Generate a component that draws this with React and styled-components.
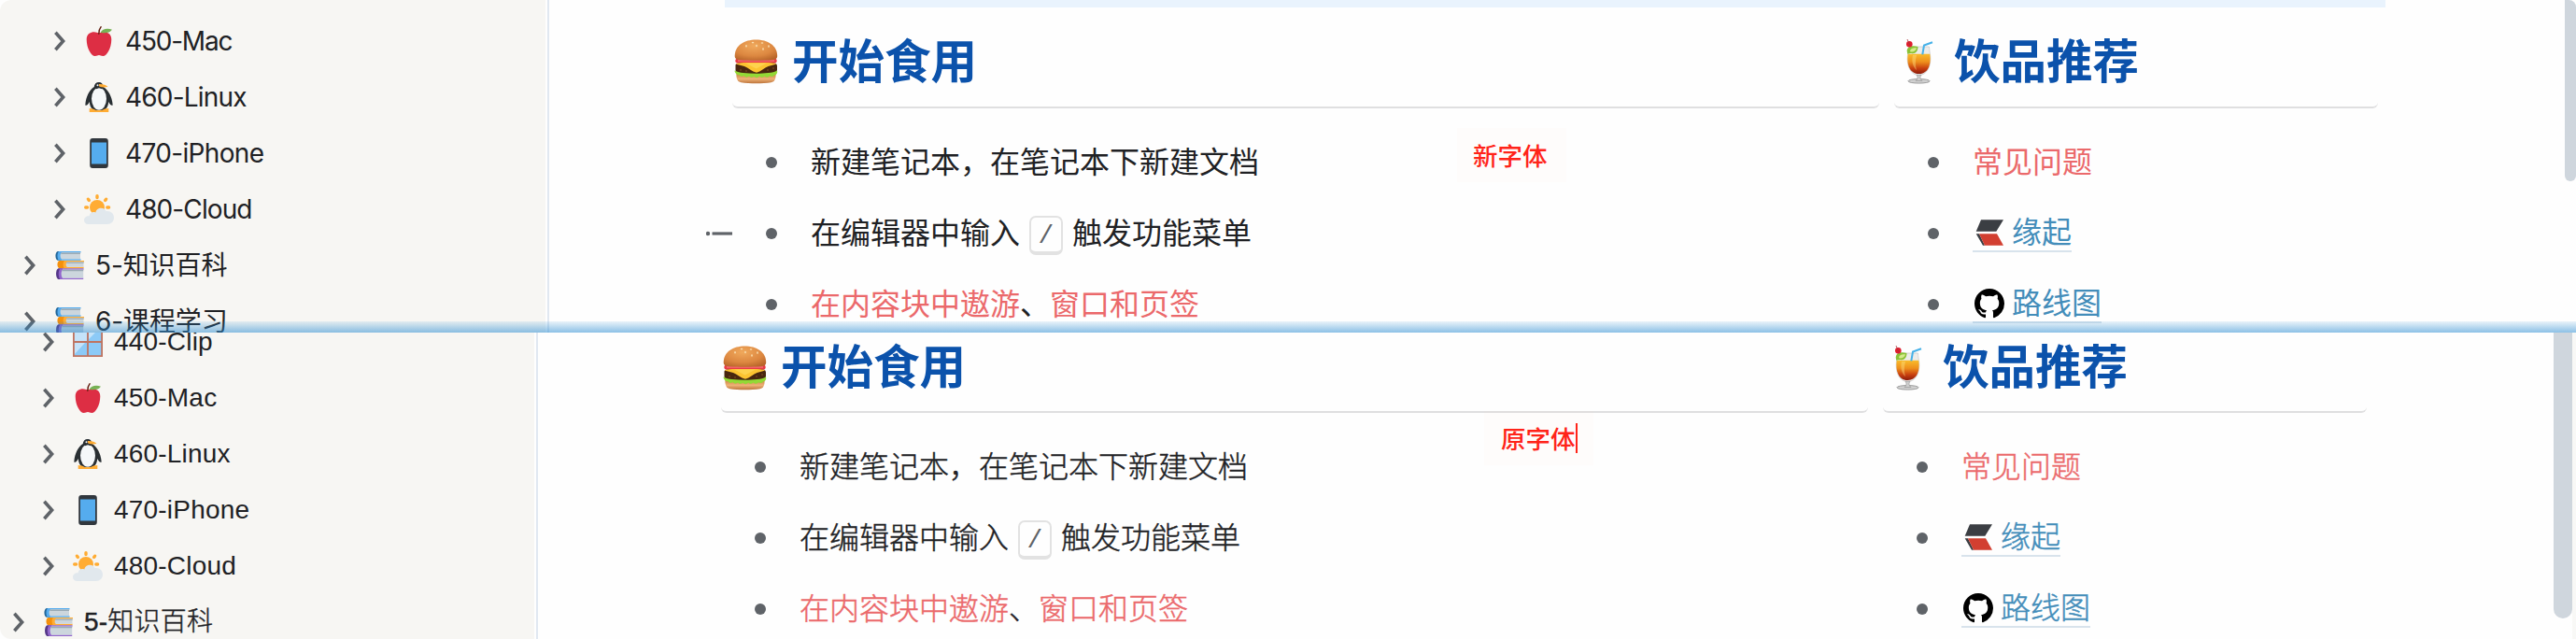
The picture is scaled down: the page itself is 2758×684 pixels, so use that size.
import React from 'react';
import styled, { createGlobalStyle } from 'styled-components';

const GlobalStyle = createGlobalStyle`
  * { box-sizing: border-box; }
  body { margin: 0; background: #fefefe; }
`;

const cjk = '"Noto Sans CJK SC", sans-serif';

const Screen = styled.main`
  width: 2758px;
  height: 684px;
  display: flex;
  flex-direction: column;
  overflow: hidden;
  color: #202124;
`;

const Pane = styled.section`
  position: relative;
  display: flex;
  flex: none;
  height: ${(p) => p.$height}px;
  overflow: hidden;
  background: #fefefe;
  font-family: ${(p) => p.$font};
  font-weight: ${(p) => p.$weight};
`;

const Sidebar = styled.nav`
  flex: none;
  width: ${(p) => p.$width}px;
  overflow: hidden;
  background: #f7f6f3;
  border-radius: ${(p) => p.$radius};
`;

const Tree = styled.div`
  display: flex;
  flex-direction: column;
  margin-top: ${(p) => p.$shift}px;
`;

const TreeRow = styled.div`
  display: flex;
  align-items: center;
  flex: none;
  height: 60px;
  padding-left: ${(p) => p.$indent}px;
  font-size: 28px;
  line-height: 40px;
  white-space: nowrap;
  svg { flex: none; }
`;

const RowIcon = styled.span`
  display: flex;
  margin: 0 12px 0 20px;
`;

const RowLabel = styled.span`
  letter-spacing: ${(p) => p.$tracking}px;
  -webkit-text-stroke: ${(p) => p.$stroke}px currentColor;
`;

const Divider = styled.div`
  flex: none;
  width: 2px;
  margin-left: 2px;
  background: #e1e8f1;
`;

const Doc = styled.article`
  flex: none;
  width: 1778px;
  margin-left: 188px;
  margin-top: ${(p) => p.$shift}px;
`;

const Callout = styled.div`
  height: 8px;
  margin-bottom: 8px;
  background: #e9f3fd;
`;

const Columns = styled.div`
  display: flex;
  gap: 16px;
  padding: 0 8px;
`;

const Column = styled.div`
  flex: none;
  width: ${(p) => p.$width}px;
`;

const Heading = styled.h2`
  display: flex;
  align-items: center;
  gap: 13px;
  height: 100px;
  margin: 0;
  padding: ${(p) => p.$drop}px 0 0 1px;
  border-bottom: 2px solid #dfdfe0;
  border-radius: 6px;
  color: #0b52ab;
  font-size: 49.5px;
  line-height: 60px;
  font-weight: 700;
  white-space: nowrap;
`;

const List = styled.ul`
  margin: ${(p) => p.$gap}px 0 0;
  padding: 0;
  list-style: none;
  -webkit-text-stroke: ${(p) => p.$stroke}px currentColor;
`;

const Item = styled.li`
  position: relative;
  display: flex;
  align-items: center;
  height: 76px;
  padding-left: 36px;
  font-size: 32px;
  line-height: 48px;
  white-space: nowrap;
  &::before {
    content: '';
    flex: none;
    width: 12px;
    height: 12px;
    margin-right: 36px;
    border-radius: 50%;
    background: #5f6368;
  }
`;

const Line = styled.div`
  display: flex;
  align-items: center;
  margin-top: -1px;
`;

const GutterMark = styled.svg`
  position: absolute;
  left: -28px;
  top: 34px;
`;

const Ref = styled.span`
  color: #eb696b;
`;

const Key = styled.kbd`
  display: flex;
  align-items: center;
  justify-content: center;
  width: 36px;
  height: 42px;
  margin: 4px 10px 0;
  padding-top: 5px;
  border: 2px solid #e2e2e2;
  border-bottom-width: 4px;
  border-radius: 7px;
  color: #5f6368;
  font: 400 28px/30px "Liberation Mono", monospace;
  -webkit-text-stroke: 0;
`;

const Link = styled.a`
  display: flex;
  align-items: center;
  gap: 8px;
  height: ${(p) => p.$height}px;
  padding-left: 2px;
  border-bottom: 2px solid #d8e3ec;
  color: #438dba;
`;

const ScrollThumb = styled.div`
  position: absolute;
  top: 0;
  right: ${(p) => p.$right}px;
  width: ${(p) => p.$width}px;
  height: ${(p) => p.$height}px;
  border-radius: ${(p) => p.$radius};
  background: #cfd6dd;
`;

const EdgeStrip = styled.div`
  position: absolute;
  top: 0;
  right: 0;
  width: 4px;
  height: 100%;
  background: #f8f8f6;
`;

const Glow = styled.div`
  position: absolute;
  left: 0;
  right: 0;
  bottom: 0;
  height: 12px;
  background: linear-gradient(rgba(46, 142, 210, 0.1), rgba(46, 142, 210, 0.55));
`;

const Note = styled.div`
  position: absolute;
  left: ${(p) => p.$x}px;
  top: ${(p) => p.$y}px;
  display: flex;
  align-items: center;
  width: 117px;
  height: 58px;
  padding-left: ${(p) => p.$pad}px;
  background: rgba(255, 190, 150, 0.03);
  color: #ff2419;
  font: 500 26.5px/40px ${cjk};
  white-space: nowrap;
`;

const Caret = styled.i`
  width: 2px;
  height: 32px;
  background: #ff2419;
`;

const Chevron = () => (
  <svg width="12" height="22" viewBox="0 0 12 22" fill="none" stroke="#5f6368" strokeWidth="3.6">
    <path d="M1.400 1.800 9.600 11l-8.200 9.200" />
  </svg>
);

const Svg32 = ({ children }) => (
  <svg width="32" height="32" viewBox="0 0 32 32">{children}</svg>
);

const Apple = () => (
  <Svg32>
    <path fill="#dd2e44" d="M21.3 6.2c-2.600 0-2.700.9-5.300.9s-2.700-.9-5.300-.9c-3.600 0-8 1.800-8 8C2.700 24 8 32 11.600 32c2.600 0 2.700-.9 4.400-.9s1.800.9 4.400.9c3.600 0 8.900-8 8.900-17.800 0-6.200-4.400-8-8-8z" />
    <path fill="#77b255" d="M17.600 6.700c2-3.600 7-5 12.400-3-2.300 3-7.500 4.600-12.400 3z" />
    <path fill="none" stroke="#662113" strokeWidth="1.400" strokeLinecap="round" d="M15.800 8.300c0-3 .7-5.600 2.300-7.500" />
  </Svg32>
);

const Penguin = () => (
  <Svg32>
    <path fill="#292f33" d="M16 0c-3 0-5 1.900-5.200 5C6 8 2 15 1.300 24.500c1.500.8 3-.5 4.600-3.500C6 27 9 31 16 31s10-4 10.100-10c1.600 3 3.100 4.300 4.600 3.500C30 15 25.500 8 20.600 5 20.200 1.800 18.500 0 16 0z" />
    <ellipse cx="16" cy="17.700" rx="8" ry="12" fill="#f5f8fa" />
    <path fill="#292f33" d="M11 4.500C12 1 20 1 20.600 5l-1.400 2.200L16 6.300l-3 1z" />
    <circle cx="14.500" cy="3.200" r="1" fill="#f5f8fa" />
    <path fill="#ffac33" d="M15.800 2c4-.2 8 .6 9.800 3-3.500.8-7 .6-9.400-.5zM5.700 28c3 .2 5.300.8 7.200 2h6.200c1.900-1.200 4.200-1.800 7.200-2v4H5.700z" />
  </Svg32>
);

const Phone = () => (
  <Svg32>
    <rect x="6.200" width="19.600" height="32" rx="3" fill="#31373d" />
    <path fill="#55acee" d="M8 4.400h16v23.200H8z" />
  </Svg32>
);

const SunCloud = () => (
  <Svg32>
    <circle cx="14" cy="14" r="8" fill="#ffac33" />
    <g stroke="#ffac33" strokeWidth="3.400" strokeLinecap="round">
      <path d="M14 1.700v1.800M4.400 5.200l1 1.300M23.600 5.200l-1 1.300M1.700 14h1.800M24.800 14h1.800" />
    </g>
    <path fill="#e1e8ed" d="M25.200 18.100c-.5 0-.9.100-1.400.2-.9-2-3-3.600-5.500-3.600-3 0-5.500 2-5.900 4.800-.9-.5-1.800-.6-2.700-.5-2.300.1-4 2-4.100 4.300C2.500 22.900 0 25 0 27.700 0 30.200 2 32 4.500 32h20.600c3.800 0 6.900-3.100 6.900-7s-3-6.900-6.800-6.900z" />
  </Svg32>
);

const Books = () => (
  <Svg32>
    <path fill="#226699" d="M3.700 1h4v9.700h-4C.7 10 .7 2 3.700 1z" />
    <path fill="#55acee" d="M5 1h23.500v1.600H7.500v6.600h21v1.500H5C3 9 3 3 5 1z" />
    <path fill="#ccd6dd" d="M7.500 2.600H28v6.600H7.500c-1.300-1.600-1.300-5 0-6.600z" />
    <path fill="#9aaab4" d="M8 2.600h20v1.500H7z" />
    <path fill="#f4900c" d="M5.700 11H14v8.300H5.700c-3-.8-3-7.500 0-8.300z" />
    <path fill="#ffac33" d="M11 11h21v1.400H14v5.400h17.600v1.500H11c-1.800-1.600-1.800-6.600 0-8.300z" />
    <path fill="#ccd6dd" d="M13.500 12.400h18v5.400h-18c-1.200-1.400-1.200-4 0-5.400z" />
    <path fill="#9aaab4" d="M13.600 12.400h18v1.400H13z" />
    <path fill="#553788" d="M4.500 19.300H9V31H4.500c-3.300-1-3.300-10.700 0-11.700z" />
    <path fill="#9266cc" d="M6.500 19.300h25v1.500H9v8.700h22.200V31H6.500c-2.300-2.300-2.300-9.400 0-11.700z" />
    <path fill="#ccd6dd" d="M8.700 20.800h22.500v8.700H8.700c-1.500-2.200-1.500-6.500 0-8.700z" />
    <path fill="#9aaab4" d="M9 20.800h22.200v1.500H8z" />
  </Svg32>
);

const WindowIcon = () => (
  <Svg32>
    <path fill="#8ccaf7" d="M0 0h32v32H0z" />
    <path fill="#c5e3f9" d="M1 1h14v14H1zM17 1h12L17 13zM1 17h12L1 30z" />
    <path fill="none" stroke="#bf7460" strokeWidth="1.800" d="M.9.900h30.200v30.200H.900zM16 0v32M0 16h32" />
  </Svg32>
);

const Burger = () => (
  <svg width="50" height="50" viewBox="0 0 50 50">
    <defs>
      <radialGradient id="bun" cx="45%" cy="30%" r="75%">
        <stop offset="0" stopColor="#f0a95c" />
        <stop offset=".65" stopColor="#dc8740" />
        <stop offset="1" stopColor="#b9662a" />
      </radialGradient>
      <linearGradient id="heel" x2="0" y2="1">
        <stop offset="0" stopColor="#c9803f" />
        <stop offset=".55" stopColor="#eeb277" />
        <stop offset="1" stopColor="#bd733a" />
      </linearGradient>
    </defs>
    <path fill="url(#heel)" d="M3.500 37.500h42c.6 5-1 9-5 9.800-9 1.300-23 1.300-32 0-4-.8-5.600-4.800-5-9.800z" />
    <path fill="#48260f" d="M2.500 29c0-2 3-3 5-3h34c3 0 5.500 1 5.500 3.500v4c0 2.500-2.500 4-6 4.300-10 1-23 1-33 0-4-.4-5.500-1.800-5.500-4.300z" />
    <g fill="#6f421e"><circle cx="8" cy="34" r="1" /><circle cx="14" cy="35" r="1" /><circle cx="37" cy="34" r="1" /><circle cx="43" cy="32" r="1" /></g>
    <path fill="#93d936" d="M1.500 34.500c3 1.500 6 2.200 9 2.500 9 1 19 1 27 0 4-.4 7-1 9.500-2.500.8 2.500-.6 4.800-3 5-1.400 2-3.500 2-5 .8-1.700 2-4 2-5.500.3-1.700 1.800-4 1.700-5.400 0-1.600 2-4.300 2-5.700.2-1.600 1.600-4 1.500-5.400-.3-1.700 1.700-4.200 1.500-5.400-.4-1.700 1.300-4 1-5-.8-2.600.3-5-2.300-5.100-4.800z" />
    <path fill="#e93b47" d="M3 22h43c1.500 2.500.5 4.600-2 4.600H5c-2.500 0-3.500-2.100-2-4.600z" />
    <path fill="#f78a88" d="M5 23.600h39v.9H5z" />
    <path fill="#fcc331" d="M2.500 27.500c3-1.500 8-1.500 12-1.500h20c4 0 9 0 12 1.500l-9 2.500c-4 1.600-8 5.500-12.500 6.800C20 35.500 16 31.600 12 30z" />
    <path fill="#ffdc63" d="M13 26.600h23l-11.300 6z" opacity=".6" />
    <path fill="url(#bun)" d="M1.700 19C1.700 7.500 12 1.500 24.400 1.500S47.200 7.500 47.200 19c0 3-2.500 4-5.700 4.200-10 .6-24 .6-34 0C4.200 23 1.700 22 1.700 19z" />
    <g fill="#f9deb0"><ellipse cx="21" cy="4.600" rx="1.300" ry=".8" /><ellipse cx="14" cy="8.300" rx=".8" ry="1.300" /><ellipse cx="25" cy="8" rx=".8" ry="1.200" /><ellipse cx="31" cy="5" rx="1.300" ry=".8" /><ellipse cx="32" cy="11.500" rx=".8" ry="1.300" /><ellipse cx="38" cy="8.600" rx=".8" ry="1.300" /></g>
  </svg>
);

const Drink = () => (
  <svg width="50" height="50" viewBox="0 0 50 50">
    <defs>
      <linearGradient id="juice" x2="0" y2="1">
        <stop offset="0" stopColor="#f9bd2c" />
        <stop offset=".4" stopColor="#ee8f1c" />
        <stop offset=".72" stopColor="#c9400f" />
        <stop offset="1" stopColor="#8c1c0c" />
      </linearGradient>
    </defs>
    <path fill="#ececea" stroke="#c9c9c9" strokeWidth=".7" d="M14.500 9h22c.2 3 .7 6 1.200 10 1 10-3 20.500-12.200 20.500S12.300 29 13.300 19c.5-4 1-7 1.200-10z" />
    <path fill="url(#juice)" d="M13.800 16.700h23.400c1.500 8-.2 21.300-11.700 21.300S12.300 24.700 13.800 16.700z" />
    <path fill="#ffe58a" opacity=".4" d="M19 18h4c-1.500 6-1.500 11 0 16-4-3-5.500-10-4-16z" />
    <path fill="none" stroke="#46b1e8" strokeWidth="2" d="M29.300 17.300 31 7.500 40 4.200" />
    <path fill="#8ac236" d="M12.700 13.500C13 9 17 7 24.500 9c0 5-3 8-7 7-2 0-3.500 1-4.300.5z" />
    <path fill="#d5eb8a" d="M16 14c0-2.500 2.500-4 7-3.800-.5 3-4 5.500-7 3.800z" />
    <circle cx="15.300" cy="6.300" r="3.300" fill="#df1e2e" />
    <path stroke="#a8323b" strokeWidth=".8" d="m13 1 3 7" />
    <ellipse cx="25.500" cy="45.800" rx="11.600" ry="2.300" fill="#d0d0d0" stroke="#8b8b8b" strokeWidth=".8" />
    <path fill="#cfcfcf" stroke="#8f8f8f" strokeWidth=".6" d="M23 39.300h5c-1.500 2-1.500 4 1 6.200h-7c2.500-2.200 2.500-4.200 1-6.200z" />
  </svg>
);

const SiYuanLogo = () => (
  <Svg32>
    <path fill="#3b3e43" d="M7 2.300h24l-7.700 12.400H1.700zM1.700 17.300H5l6 12.400H9z" />
    <path fill="#d23f31" d="M5 17.300h19l7 12.400H11z" />
  </Svg32>
);

const GitHubLogo = () => (
  <svg width="32" height="32" viewBox="0 0 16 16">
    <path fill="#000" d="M8 0C3.580 0 0 3.580 0 8c0 3.540 2.290 6.530 5.470 7.590.4.070.55-.17.55-.38 0-.19-.01-.82-.01-1.490-2.010.37-2.530-.49-2.690-.94-.09-.23-.48-.94-.82-1.130-.28-.15-.68-.52-.01-.53.63-.01 1.080.58 1.230.82.72 1.210 1.870.87 2.330.66.07-.52.28-.87.51-1.070-1.780-.2-3.640-.89-3.640-3.950 0-.87.31-1.590.82-2.150-.08-.2-.36-1.020.08-2.120 0 0 .67-.21 2.200.82.64-.18 1.320-.27 2-.27s1.360.09 2 .27c1.530-1.040 2.200-.82 2.200-.82.44 1.100.16 1.920.08 2.120.51.56.82 1.270.82 2.150 0 3.070-1.870 3.750-3.650 3.950.29.25.54.73.54 1.480 0 1.070-.01 1.930-.01 2.200 0 .21.15.46.55.38A8.010 8.010 0 0 0 16 8c0-4.420-3.580-8-8-8z" />
  </svg>
);

const tree = [
  { icon: <WindowIcon />, label: '440-Clip', level: 1, tighten: -0.9 },
  { icon: <Apple />, label: '450-Mac', level: 1, tighten: -1.2 },
  { icon: <Penguin />, label: '460-Linux', level: 1, tighten: -0.8 },
  { icon: <Phone />, label: '470-iPhone', level: 1, tighten: -0.65 },
  { icon: <SunCloud />, label: '480-Cloud', level: 1, tighten: -0.9 },
  { icon: <Books />, label: '5-知识百科', level: 0, tighten: -0.1 },
  { icon: <Books />, label: '6-课程学习', level: 0, tighten: -0.1 },
];

const FileTree = ({ rows, shift, indent, tight }) => (
  <Tree $shift={shift}>
    {rows.map((row) => (
      <TreeRow key={row.label} $indent={indent + row.level * 32}>
        <Chevron />
        <RowIcon>{row.icon}</RowIcon>
        <RowLabel $tracking={tight ? row.tighten : 0.2} $stroke={!tight && !row.level ? 0.4 : 0}>
          {row.label}
        </RowLabel>
      </TreeRow>
    ))}
  </Tree>
);

const Content = ({ drop, gap, stroke, gutter }) => (
  <Columns>
    <Column $width={1228}>
      <Heading $drop={drop}><Burger />开始食用</Heading>
      <List $gap={gap} $stroke={stroke}>
        <Item><Line>新建笔记本，在笔记本下新建文档</Line></Item>
        <Item>
          {gutter && (
            <GutterMark width="28" height="8" viewBox="0 0 28 8" fill="#5f6368">
              <circle cx="2" cy="4" r="2.200" />
              <path d="M6.500 2.400H28v3.200H6.500z" />
            </GutterMark>
          )}
          <Line>在编辑器中输入<Key>/</Key>触发功能菜单</Line>
        </Item>
        <Item><Line><Ref>在内容块中遨游</Ref>、<Ref>窗口和页签</Ref></Line></Item>
      </List>
    </Column>
    <Column $width={518}>
      <Heading $drop={drop}><Drink />饮品推荐</Heading>
      <List $gap={gap} $stroke={stroke}>
        <Item><Line><Ref>常见问题</Ref></Line></Item>
        <Item><Link $height={40}><SiYuanLogo />缘起</Link></Item>
        <Item><Link $height={40}><GitHubLogo />路线图</Link></Item>
      </List>
    </Column>
  </Columns>
);

export default function App() {
  return (
    <Screen>
      <GlobalStyle />
      <Pane $height={356} $font={`Inter, ${cjk}`} $weight={400}>
        <Sidebar $width={584} $radius="12px 0 0 0">
          <FileTree rows={tree} shift={-46} indent={26} tight />
        </Sidebar>
        <Divider />
        <Doc $shift={0}>
          <Callout />
          <Content drop={2} gap={20} stroke={0} gutter />
        </Doc>
        <ScrollThumb $right={0} $width={12} $height={194} $radius="0 10px 8px 8px" />
        <Note $x={1560} $y={137} $pad={17}>新字体</Note>
        <Glow />
      </Pane>
      <Pane $height={328} $font={`"Liberation Sans", ${cjk}`} $weight={300}>
        <Sidebar $width={572} $radius="0 0 0 12px">
          <FileTree rows={tree.slice(0, 6)} shift={-20} indent={14} />
        </Sidebar>
        <Divider />
        <Doc $shift={-14}>
          <Content drop={6} gap={20} stroke={0.45} />
        </Doc>
        <EdgeStrip />
        <ScrollThumb $right={4} $width={20} $height={306} $radius="0 0 10px 10px" />
        <Note $x={1589} $y={84} $pad={18}>原字体<Caret /></Note>
      </Pane>
    </Screen>
  );
}
